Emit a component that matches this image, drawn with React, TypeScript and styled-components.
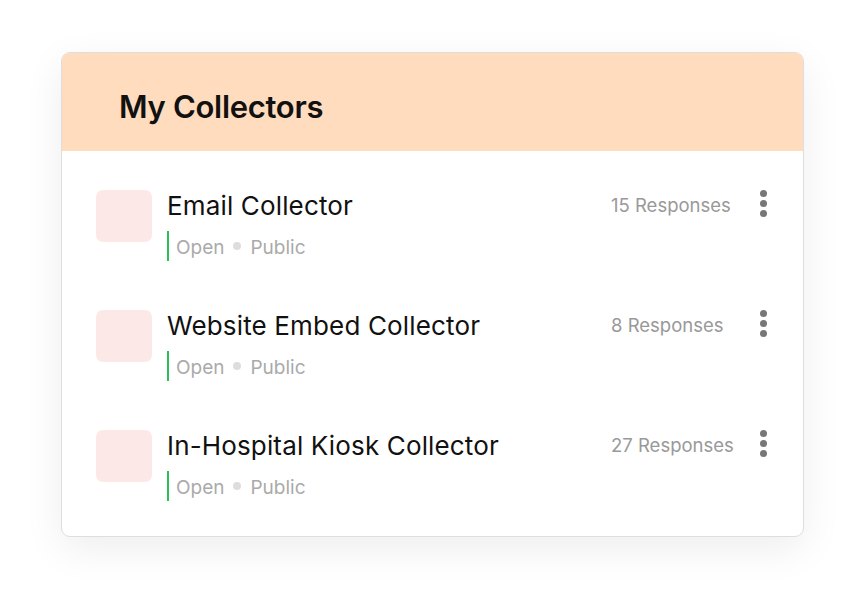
import React from "react";
import styled, { createGlobalStyle } from "styled-components";

const Global = createGlobalStyle`
  html, body { margin: 0; padding: 0; background: #fff; }
  body { font-family: Inter, "Noto Sans", sans-serif; }
`;

const Page = styled.div`
  padding: 52px 0 70px 61px;
`;

const Card = styled.div`
  width: 741px;
  height: 483px;
  border: 1px solid #dedede;
  border-radius: 9px;
  background: #fff;
  box-shadow: 0 12px 40px rgba(0, 0, 0, 0.07);
  overflow: hidden;
  display: flex;
  flex-direction: column;
`;

const Header = styled.div`
  height: 98px;
  box-sizing: border-box;
  flex: none;
  background: #ffdcbe;
  display: flex;
  align-items: center;
  padding: 8px 0 0 57px;
`;

const Title = styled.h1`
  margin: 0;
  font-size: 31px;
  font-weight: 600;
  color: #111;
  letter-spacing: -0.3px;
`;

const List = styled.div`
  padding: 39px 36px 0 34px;
  display: flex;
  flex-direction: column;
`;

const Row = styled.div`
  height: 120px;
  display: flex;
  align-items: flex-start;
`;

const Thumb = styled.div`
  width: 56px;
  height: 52px;
  border-radius: 7px;
  background: #fde8e8;
  flex: none;
`;

const Info = styled.div`
  margin-left: 15px;
  flex: 1;
  min-width: 0;
  display: flex;
  flex-direction: column;
`;

const Name = styled.div`
  font-size: 26px;
  line-height: 32px;
  letter-spacing: 0.15px;
  color: #111;
`;

const Status = styled.div`
  margin-top: 9px;
  height: 30px;
  border-left: 2px solid #2ebd59;
  padding-left: 7px;
  display: flex;
  align-items: center;
  gap: 9px;
  font-size: 19px;
  color: #aaa;
  & > span {
    position: relative;
    top: 1px;
  }
`;

const Dot = styled.i`
  width: 8px;
  height: 8px;
  border-radius: 50%;
  background: #ddd;
`;

const Responses = styled.div`
  width: 149px;
  font-size: 18.5px;
  line-height: 30px;
  color: #999;
  flex: none;
`;

const Kebab = styled.div`
  display: flex;
  flex-direction: column;
  gap: 3px;
  flex: none;
  & > span {
    width: 7px;
    height: 7px;
    border-radius: 50%;
    background: #777;
  }
`;

const items = [
  { name: "Email Collector", responses: "15 Responses" },
  { name: "Website Embed Collector", responses: "8 Responses" },
  { name: "In-Hospital Kiosk Collector", responses: "27 Responses" },
];

export default function App() {
  return (
    <Page>
      <Global />
      <Card>
        <Header>
          <Title>My Collectors</Title>
        </Header>
        <List>
          {items.map((it) => (
            <Row key={it.name}>
              <Thumb />
              <Info>
                <Name>{it.name}</Name>
                <Status>
                  <span>Open</span>
                  <Dot />
                  <span>Public</span>
                </Status>
              </Info>
              <Responses>{it.responses}</Responses>
              <Kebab>
                <span />
                <span />
                <span />
              </Kebab>
            </Row>
          ))}
        </List>
      </Card>
    </Page>
  );
}
